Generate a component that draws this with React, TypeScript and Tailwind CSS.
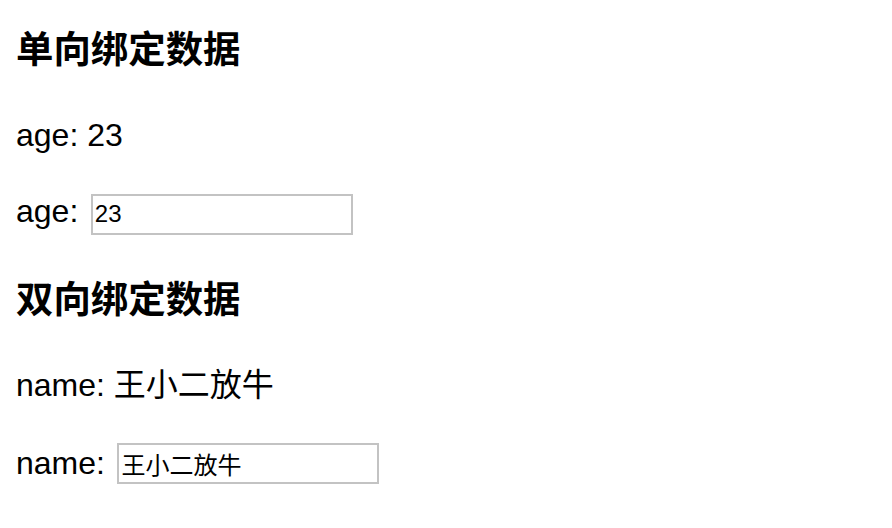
import { useState } from "react";

const font = { fontFamily: '"Liberation Sans", "Noto Sans CJK SC", sans-serif' };

export default function App() {
  const [age] = useState("23");
  const [name, setName] = useState("王小二放牛");

  return (
    <div className="bg-white text-black px-4 pt-[29px] min-h-screen" style={font}>
      {/* one-way binding */}
      <h3 className="text-[37.44px] leading-[43px] font-bold">单向绑定数据</h3>
      <p className="mt-[45px] text-[32px] leading-[37px]">age: {age}</p>
      <div className="mt-[39px] flex items-baseline text-[32px] leading-[37px]">
        <span>age:</span>
        <input
          className="ml-[12.5px] w-[262px] h-[41px] border-2 border-[#c3c3c3] px-[2px] text-[24px] text-black outline-none"
          style={font}
          value={age}
          readOnly
        />
      </div>

      {/* two-way binding */}
      <h3 className="mt-[44px] text-[37.44px] leading-[43px] font-bold">双向绑定数据</h3>
      <p className="mt-[45px] text-[32px] leading-[37px]">name: {name}</p>
      <div className="mt-[39px] flex items-baseline text-[32px] leading-[37px]">
        <span>name:</span>
        <input
          className="ml-[12.5px] w-[262px] h-[41px] border-2 border-[#c3c3c3] px-[2px] text-[24px] text-black outline-none"
          style={font}
          value={name}
          onChange={(e) => setName(e.target.value)}
        />
      </div>
    </div>
  );
}
